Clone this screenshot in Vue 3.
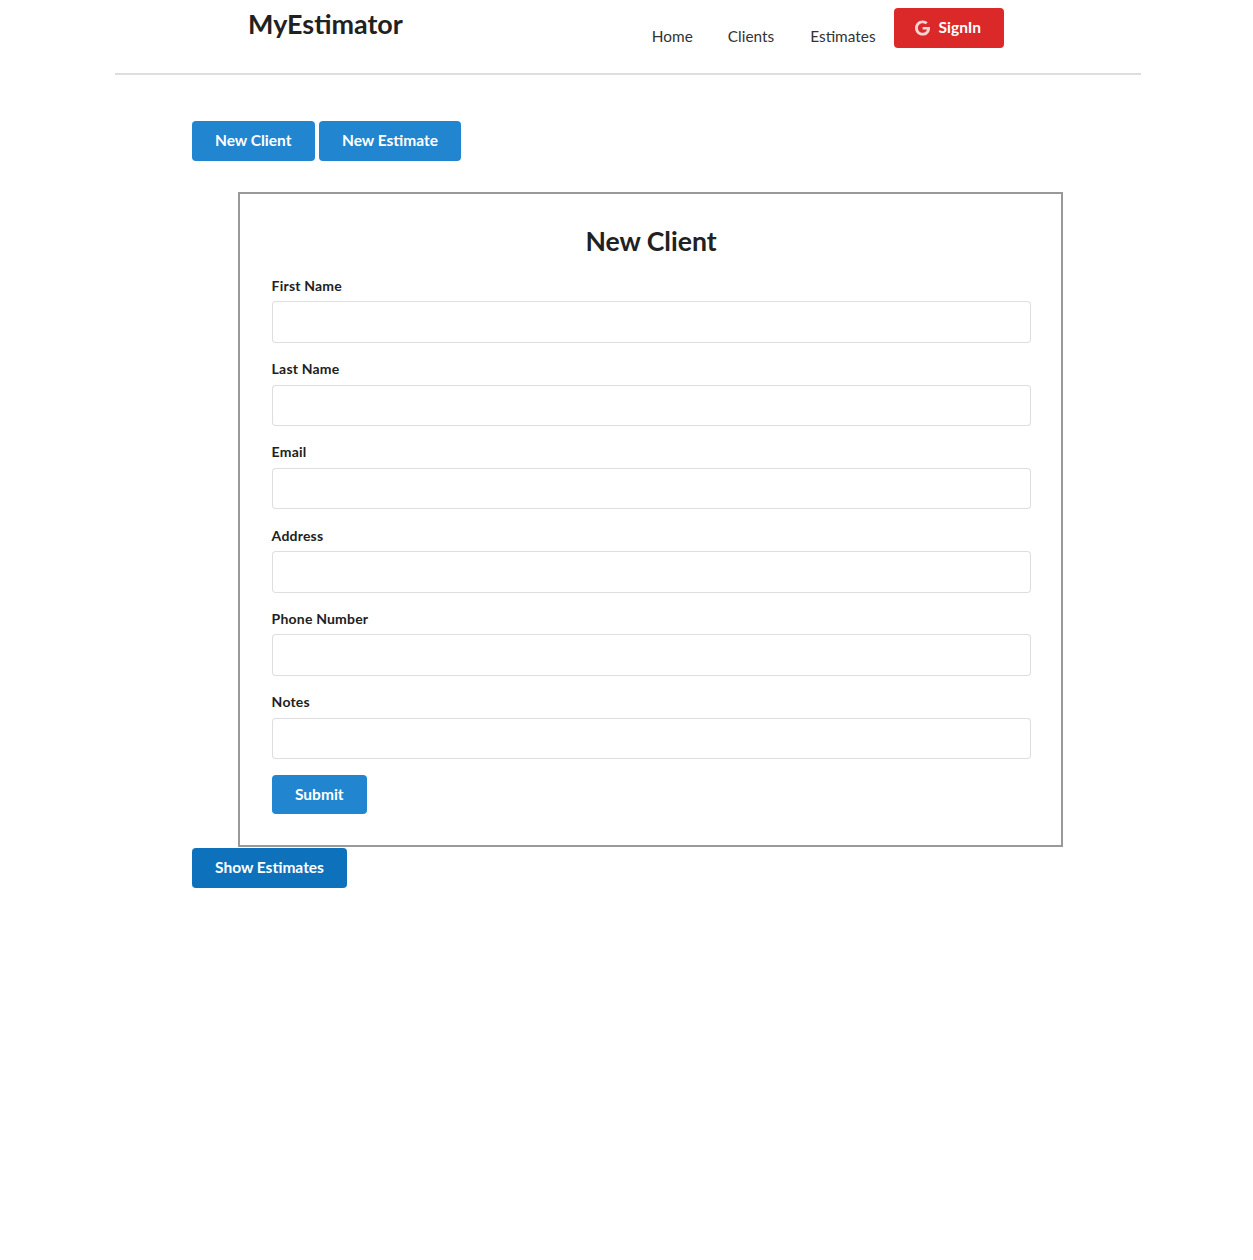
<script setup>
const fields = ["First Name", "Last Name", "Email", "Address", "Phone Number", "Notes"]
</script>

<template>
  <div class="page">
    <header class="topbar">
      <div class="logo">MyEstimator</div>
      <nav class="nav">
        <a class="link">Home</a>
        <a class="link">Clients</a>
        <a class="link">Estimates</a>
        <button class="btn red">
          <svg class="gicon" viewBox="0 0 488 512" width="15" height="16">
            <path fill="currentColor" d="M488 261.8C488 403.3 391.1 504 248 504 110.8 504 0 393.2 0 256S110.8 8 248 8c66.8 0 123 24.5 166.3 64.9l-67.5 64.9C258.5 52.6 94.3 116.6 94.3 256c0 86.5 69.1 156.6 153.7 156.6 98.2 0 135-70.4 140.8-106.9H248v-85.3h236.1c2.3 12.7 3.9 24.9 3.9 41.4z"/>
          </svg>
          SignIn
        </button>
      </nav>
    </header>

    <main class="content">
      <div class="actions">
        <button class="btn blue">New Client</button>
        <button class="btn blue">New Estimate</button>
      </div>

      <form class="card" @submit.prevent>
        <h2 class="title">New Client</h2>
        <div class="field" v-for="f in fields" :key="f">
          <label>{{ f }}</label>
          <input type="text" />
        </div>
        <button class="btn blue submit">Submit</button>
      </form>

      <button class="btn dark">Show Estimates</button>
    </main>
  </div>
</template>

<style>
body {
  background: #fff;
}
</style>

<style scoped>
.page {
  width: 1253px;
  height: 1260px;
  font-family: Lato, "Liberation Sans", sans-serif;
  font-size: 14px;
  color: rgba(0, 0, 0, 0.87);
  overflow: hidden;
}

.topbar {
  width: 1026px;
  height: 75px;
  margin-left: 115px;
  border-bottom: 2px solid #dededf;
  box-sizing: border-box;
  display: flex;
  justify-content: space-between;
}

.logo {
  margin: 7px 0 0 133px;
  font-size: 26.9px;
  line-height: 33px;
  font-weight: 700;
  color: #212121;
}

.nav {
  display: flex;
  align-items: flex-start;
  margin-right: 137px;
  padding-top: 8px;
}

.link {
  font-size: 15.4px;
  line-height: 20px;
  margin-top: 18px;
  margin-right: 36px;
  color: #333;
}

.link:first-child {
  margin-right: 35px;
}

.link:nth-child(3) {
  margin-right: 18px;
}

.btn {
  font-family: Lato, "Liberation Sans", sans-serif;
  font-size: 15.5px;
  font-weight: 700;
  line-height: 16px;
  height: 40px;
  padding: 0 23px 2px;
  border: 0;
  border-radius: 4px;
  color: #fff;
  display: inline-flex;
  align-items: center;
}

.red {
  background: #db2828;
  padding: 0 23px 2px 21px;
}

.gicon {
  margin-right: 9px;
  margin-top: 1px;
  opacity: 0.8;
}

.blue {
  background: #2185d0;
}

.dark {
  background: #0d71bb;
}

.content {
  padding: 46px 0 0 192px;
}

.actions {
  display: flex;
  gap: 4px;
}

.actions .btn:first-child {
  width: 123px;
}

.card {
  width: 825px;
  height: 655px;
  box-sizing: border-box;
  margin: 31px 0 1px 46px;
  padding: 0 30px 0 32px;
  border: 2px solid #999;
}

.title {
  margin: 31px 0 19.35px;
  padding-right: 1px;
  font-size: 26.6px;
  line-height: 33px;
  font-weight: 700;
  text-align: center;
  color: #212121;
}

.field {
  margin-bottom: 17.65px;
}

.field label {
  display: block;
  font-size: 14px;
  line-height: 18px;
  font-weight: 700;
  letter-spacing: 0.2px;
  margin: -0.4px 0 6.4px -0.4px;
  color: #212121;
}

.field input {
  display: block;
  width: 100%;
  height: 41.6px;
  box-sizing: border-box;
  border: 1px solid rgba(34, 36, 38, 0.15);
  border-radius: 4px;
  background: #fff;
  outline: none;
}

.submit {
  height: 39px;
  margin-top: -2px;
  padding-bottom: 0;
}
</style>
